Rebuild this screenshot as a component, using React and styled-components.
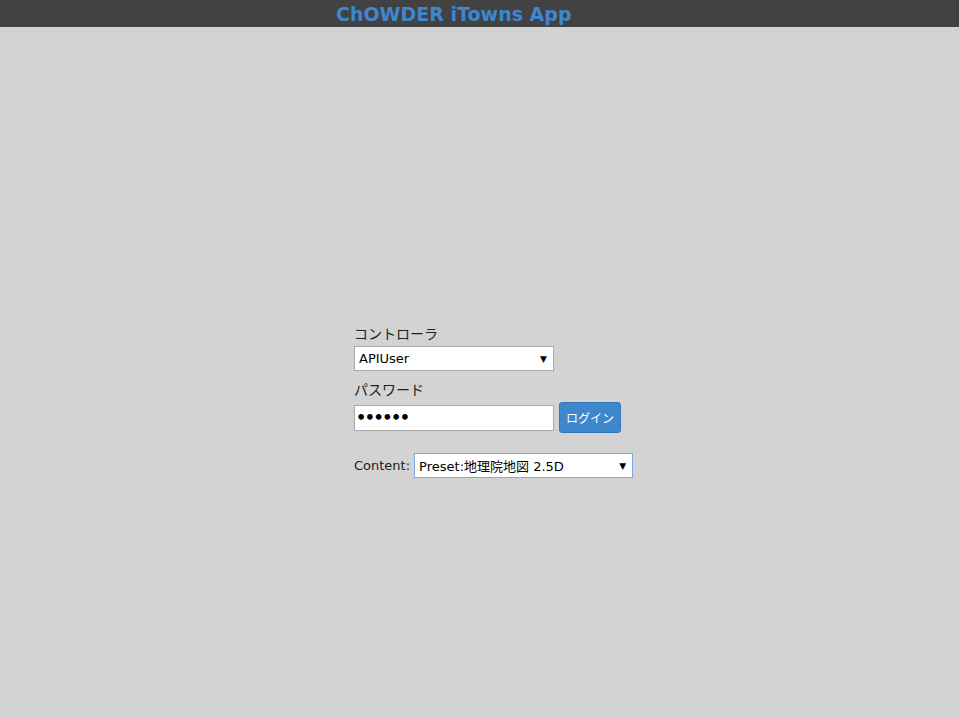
import React from 'react'
import styled, { createGlobalStyle } from 'styled-components'

const GlobalStyle = createGlobalStyle`
  html, body {
    margin: 0;
    padding: 0;
    background: #d3d3d3;
    font-family: "DejaVu Sans", "Noto Sans CJK JP", sans-serif;
  }
`

const Page = styled.div`
  min-height: 717px;
  background: #d3d3d3;
`

const Header = styled.div`
  height: 27px;
  background: #424242;
  display: flex;
  align-items: center;
  padding-left: 336px;
`

const Title = styled.div`
  color: #3d87d0;
  font-size: 19px;
  font-weight: bold;
  line-height: 22px;
`

const Form = styled.div`
  display: flex;
  flex-direction: column;
  padding: 298px 0 0 354px;
`

const Label = styled.div`
  font-size: 14px;
  color: #222;
  line-height: 18px;
  margin-bottom: 3px;
`

const Row = styled.div`
  display: flex;
  align-items: center;
  gap: ${(p) => p.gap ?? 5}px;
  margin-bottom: ${(p) => p.mb || 0}px;
`

const Select = styled.div`
  box-sizing: border-box;
  width: ${(p) => p.w}px;
  height: 25px;
  background: #fff;
  border: 1px solid ${(p) => (p.focus ? '#7fa6e6' : '#a9a9a9')};
  display: flex;
  align-items: center;
  justify-content: space-between;
  padding: 0 6px 0 4px;
  font-size: 13px;
  color: #000;
`

const Arrow = styled.span`
  font-size: 9px;
`

const Input = styled.div`
  box-sizing: border-box;
  width: 200px;
  height: 26px;
  background: #fff;
  border: 1px solid #a9a9a9;
  display: flex;
  align-items: center;
  padding-left: 1px;
  font-size: 16px;
  font-weight: bold;
  letter-spacing: -1.5px;
`

const Button = styled.button`
  box-sizing: border-box;
  height: 31px;
  width: 62px;
  background: #3d87cc;
  border: 1px solid #3578b8;
  border-radius: 3px;
  color: #fff;
  font-family: "DejaVu Sans", "Noto Sans CJK JP", sans-serif;
  font-size: 12px;
  padding: 0;
`

const ContentLabel = styled.span`
  font-size: 13px;
  color: #222;
`

export default function App() {
  return (
    <Page>
      <GlobalStyle />
      <Header>
        <Title>ChOWDER iTowns App</Title>
      </Header>
      <Form>
        <Label>コントローラ</Label>
        <Row mb={10}>
          <Select w={200}>
            APIUser
            <Arrow>▼</Arrow>
          </Select>
        </Row>
        <Label>パスワード</Label>
        <Row mb={20}>
          <Input>••••••</Input>
          <Button>ログイン</Button>
        </Row>
        <Row gap={4}>
          <ContentLabel>Content:</ContentLabel>
          <Select w={219} focus>
            Preset:地理院地図 2.5D
            <Arrow>▼</Arrow>
          </Select>
        </Row>
      </Form>
    </Page>
  )
}
